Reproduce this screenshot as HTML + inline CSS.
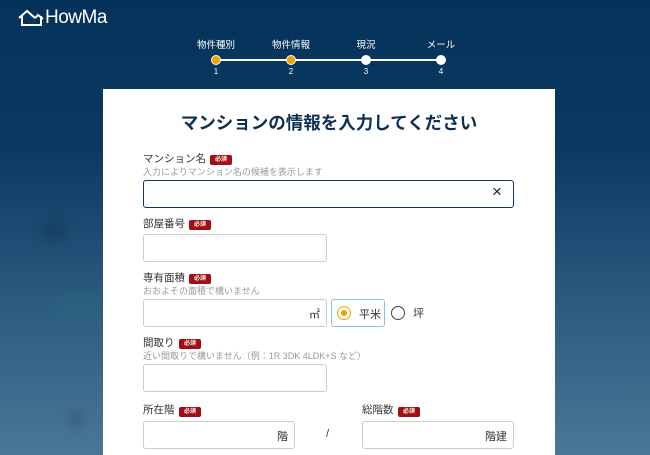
<!DOCTYPE html>
<html><head><meta charset="utf-8"><style>
*{margin:0;padding:0;box-sizing:border-box}
html{width:650px;height:455px;overflow:hidden}
body{width:650px;height:455px;overflow:hidden;position:relative;font-family:"Liberation Sans","Noto Sans CJK JP",sans-serif;background:linear-gradient(180deg,#04325a 0px,#0a3a62 150px,#2a5a80 300px,#4b7796 455px)}
.a{position:absolute;white-space:nowrap}
.blob{position:absolute;border-radius:50%;filter:blur(5px)}
.card{position:absolute;left:103px;top:89px;width:452px;height:366px;background:#fff}
.lbl{font-size:10.5px;color:#333;line-height:12px}
.hint{font-size:9px;color:#999;line-height:10px}
.badge{position:absolute;background:#a40d14;color:#fff;font-size:6px;font-weight:bold;border-radius:2px;width:22px;height:10px;line-height:10px;text-align:center}
.in{position:absolute;border:1px solid #ccc;border-radius:3px;background:#fff}
.step{font-size:9.5px;color:#fff;text-align:center;width:60px}
.dot{position:absolute;width:10px;height:10px;border-radius:50%;background:#fff;top:55px}
.num{font-size:8px;color:#fff;width:20px;text-align:center;top:67px}
</style></head><body>
<div class="blob" style="left:38px;top:218px;width:30px;height:25px;background:#163d60;opacity:.6"></div>
<div class="blob" style="left:55px;top:290px;width:50px;height:40px;background:#2f6a7c;opacity:.4"></div>
<div class="blob" style="left:68px;top:412px;width:16px;height:15px;background:#384c72;opacity:.6"></div>
<svg class="a" style="left:17px;top:9px" width="28" height="18" viewBox="0 0 28 18"><path d="M2 9 L10 2 L18 9 M5 7 V16 H24 V7 M18 9 L21 6 L26 10" fill="none" stroke="#fff" stroke-width="2"/></svg>
<div class="a" style="left:45px;top:7px;font-size:19px;color:#fff;letter-spacing:-.5px">HowMa</div>
<div class="a step" style="left:186px;top:37px">物件種別</div>
<div class="a step" style="left:261px;top:37px">物件情報</div>
<div class="a step" style="left:336px;top:37px">現況</div>
<div class="a step" style="left:411px;top:37px">メール</div>
<div class="a" style="left:216px;top:59px;width:225px;height:2px;background:#fff"></div>
<div class="dot" style="left:211px;background:#f0a000;border:1px solid #fff"></div>
<div class="dot" style="left:286px;background:#f0a000;border:1px solid #fff"></div>
<div class="dot" style="left:361px"></div>
<div class="dot" style="left:436px"></div>
<div class="a num" style="left:206px">1</div>
<div class="a num" style="left:281px">2</div>
<div class="a num" style="left:356px">3</div>
<div class="a num" style="left:431px">4</div>
<div class="card"></div>
<div class="a" style="left:103px;width:452px;text-align:center;top:110px;font-size:17.5px;font-weight:bold;color:#0d3050">マンションの情報を入力してください</div>

<div class="a lbl" style="left:143px;top:153px">マンション名</div><div class="badge" style="left:210px;top:155px">必須</div>
<div class="a hint" style="left:143px;top:167px">入力によりマンション名の候補を表示します</div>
<div class="in" style="left:143px;top:180px;width:371px;height:28px;border:1.5px solid #0f3457"></div>
<div class="a" style="left:492px;top:182px;font-size:17px;color:#222">×</div>

<div class="a lbl" style="left:143px;top:218px">部屋番号</div><div class="badge" style="left:189px;top:220px">必須</div>
<div class="in" style="left:143px;top:234px;width:184px;height:28px"></div>

<div class="a lbl" style="left:143px;top:272px">専有面積</div><div class="badge" style="left:189px;top:274px">必須</div>
<div class="a hint" style="left:143px;top:286px">おおよその面積で構いません</div>
<div class="in" style="left:143px;top:299px;width:184px;height:28px"></div>
<div class="a" style="left:309px;top:306px;font-size:11px;color:#333">㎡</div>
<div class="in" style="left:331px;top:299px;width:54px;height:28px;border-color:#8cbfe0"></div>
<div class="a" style="left:337px;top:306px;width:14px;height:14px;border:1.5px solid #f0a000;border-radius:50%"></div>
<div class="a" style="left:341px;top:310px;width:6px;height:6px;background:#f0a000;border-radius:50%"></div>
<div class="a" style="left:359px;top:306px;font-size:11px;color:#333">平米</div>
<div class="a" style="left:391px;top:306px;width:14px;height:14px;border:1.5px solid #444;border-radius:50%"></div>
<div class="a" style="left:413px;top:305px;font-size:11px;color:#333">坪</div>

<div class="a lbl" style="left:143px;top:337px">間取り</div><div class="badge" style="left:179px;top:339px">必須</div>
<div class="a hint" style="left:143px;top:351px">近い間取りで構いません（例：1R 3DK 4LDK+S など）</div>
<div class="in" style="left:143px;top:364px;width:184px;height:28px"></div>

<div class="a lbl" style="left:143px;top:404px">所在階</div><div class="badge" style="left:179px;top:407px">必須</div>
<div class="in" style="left:143px;top:421px;width:152px;height:28px"></div>
<div class="a" style="left:277px;top:428px;font-size:11px;color:#333">階</div>
<div class="a" style="left:326px;top:428px;font-size:11px;color:#333">/</div>
<div class="a lbl" style="left:362px;top:404px">総階数</div><div class="badge" style="left:398px;top:407px">必須</div>
<div class="in" style="left:362px;top:421px;width:152px;height:28px"></div>
<div class="a" style="left:485px;top:428px;font-size:11px;color:#333">階建</div>
</body></html>
